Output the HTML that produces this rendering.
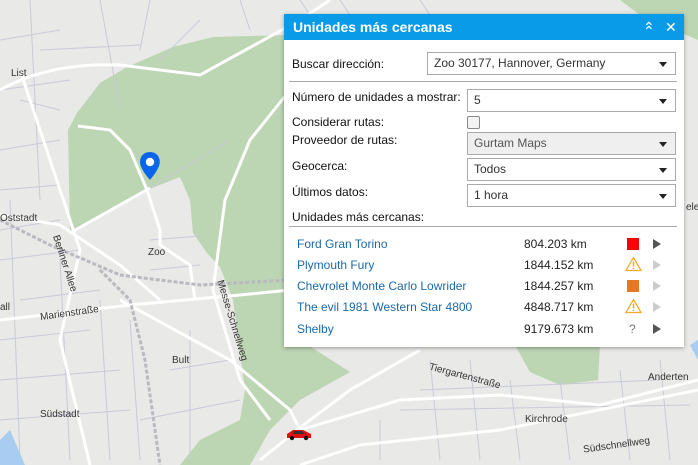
<!DOCTYPE html>
<html><head><meta charset="utf-8"><style>
*{box-sizing:border-box;margin:0;padding:0}
body{width:698px;height:465px;overflow:hidden;position:relative;background:#e9e9e7;font-family:"Liberation Sans",Arial,sans-serif;font-size:12px;color:#222}
svg.map{position:absolute;left:0;top:0}
.panel{position:absolute;left:284px;top:14px;width:400px;height:333px;background:#fff;box-shadow:0 1px 4px rgba(0,0,0,.35)}
.hdr{height:26px;background:#0a9be8;color:#fff;font-weight:bold;font-size:14px;line-height:26px;padding-left:9px;position:relative}
.hdr .i{position:absolute;top:0;font-weight:normal;font-size:14px}
.lbl{position:absolute;left:8px;font-size:12px;color:#111}
.sel{position:absolute;border:1px solid #aaa;background:#fff;height:23px;line-height:21px;padding-left:6px;font-size:12px;color:#333}
.sel:after{content:"";position:absolute;right:8px;top:9px;border-left:4px solid transparent;border-right:4px solid transparent;border-top:5px solid #222}
.line{position:absolute;left:5px;right:7px;height:1px;background:#aaa}
.row{position:absolute;left:0;width:400px;height:20px;font-size:12px}
.row .n{position:absolute;left:13px;color:#1a6aa8}
.row .d{position:absolute;left:240px;color:#222}
.row .ic{position:absolute;left:343px}
.row .ar{position:absolute;left:369px;top:2px;width:0;height:0;border-top:5px solid transparent;border-bottom:5px solid transparent;border-left:8px solid #555}
.row .ar.g{border-left-color:#ccc}
.mt{position:absolute;font-size:10px;color:#333}
</style></head><body>
<svg class="map" width="698" height="465" viewBox="0 0 698 465">
<rect width="698" height="465" fill="#e9e9e7"/>
<g fill="#bcd5b3">
<path d="M68 130 L77 113 L100 83 L127 67 L173 47 L213 37 L290 35 L300 340 L350 372 L300 400 L270 430 L250 465 L180 465 L200 440 L240 420 L245 390 L233 300 L220 267 L207 253 L193 233 L190 200 L180 177 L147 190 L70 233 Z"/>
<path d="M515 345 L600 345 L598 380 L560 385 L530 372Z"/>
<path d="M620 0 L698 0 L698 40 L640 15Z"/>
</g>
<g stroke="#c8cad8" stroke-width="1" fill="none">
<path d="M0 40 L60 30 M0 90 L70 80 M0 150 L60 140 M0 190 L60 185 M0 260 L80 250 M20 300 L100 290 M0 340 L90 330 M0 380 L120 370 M0 420 L130 410 M30 0 L40 200 M100 0 L120 110 M150 0 L140 50 M10 200 L20 460 M60 260 L70 460 M100 300 L110 460 M130 320 L140 460 M190 330 L190 460 M140 420 L240 400 M20 100 L60 110 M0 230 L60 220 M40 50 L140 45 M150 240 L200 236 M150 270 L200 265 M170 370 L230 360 M420 390 L660 380 M400 410 L690 405 M430 360 L440 460 M470 360 L480 460 M510 380 L520 460 M560 380 L570 460 M620 370 L630 460 M660 360 L670 460 M240 0 L250 30 M300 0 L310 15 M340 0 L350 15 M420 0 L430 15 M380 420 L380 460"/>
<path d="M147 190 L230 140 M160 60 L200 20"/>
</g>
<g stroke="#fff" stroke-width="3" fill="none">
<path d="M0 90 Q50 62 120 65 L200 75 L300 20 L330 0"/>
<path d="M20 70 L80 250 L60 340 L90 465"/>
<path d="M0 215 L60 225 L120 265 L160 300"/>
<path d="M70 233 L150 188"/>
<path d="M78 126 L110 130 L130 150 L147 190 L160 230 L160 245 L190 265 L195 300"/>
<path d="M213 290 L225 200 L250 140 L290 90"/>
<path d="M0 320 L130 305 L240 295 L290 290"/>
<path d="M120 300 L230 360 L290 410 L300 430 L400 400 L500 395 L600 405 L698 380"/>
<path d="M213 290 L240 380 L270 420"/>
<path d="M260 460 L310 420 L350 390 L420 350"/>
<path d="M300 465 L360 445 L500 430 L698 390"/>
</g>
<g stroke="#b9b9c0" stroke-width="3" fill="none" stroke-dasharray="4 2">
<path d="M0 220 L50 245 L120 275 L200 285 L290 280"/>
<path d="M100 270 L130 300 L145 360 L160 465"/>
</g>
<path d="M0 440 L10 430 L25 465 L0 465Z" fill="#a9cdf0"/>
<path d="M690 345 L698 340 L698 360Z" fill="#a9cdf0"/>
<g transform="translate(142,152)">
<path d="M11 0 C4 0 0 5 0 11 C0 19 11 31 11 31 C11 31 22 19 22 11 C22 5 18 0 11 0Z" transform="translate(-2,0) scale(.9)" fill="#0a66e8"/>
<circle cx="8" cy="10" r="4.2" fill="#fff"/>
</g>
<g transform="translate(285,428)">
<path d="M2 6 L8 2 L18 2 L26 6 L26 10 L2 10Z" fill="#d11"/>
<path d="M9 3 L17 3 L20 6 L8 6Z" fill="#333"/>
<circle cx="7" cy="10" r="2.2" fill="#111"/><circle cx="21" cy="10" r="2.2" fill="#111"/>
</g>
</svg>
<div class="mt" style="left:11px;top:68px">List</div>
<div class="mt" style="left:0;top:213px">Oststadt</div>
<div class="mt" style="left:148px;top:247px">Zoo</div>
<div class="mt" style="left:40px;top:308px;transform:rotate(-8deg)">Marienstraße</div>
<div class="mt" style="left:35px;top:258px;transform:rotate(72deg)">Berliner Allee</div>
<div class="mt" style="left:190px;top:315px;transform:rotate(73deg)">Messe-Schnellweg</div>
<div class="mt" style="left:172px;top:355px">Bult</div>
<div class="mt" style="left:40px;top:409px">Südstadt</div>
<div class="mt" style="left:428px;top:371px;transform:rotate(15deg)">Tiergartenstraße</div>
<div class="mt" style="left:525px;top:414px">Kirchrode</div>
<div class="mt" style="left:648px;top:372px">Anderten</div>
<div class="mt" style="left:583px;top:440px;transform:rotate(-8deg)">Südschnellweg</div>
<div class="mt" style="left:0;top:302px">all</div>
<div class="mt" style="left:686px;top:202px">ele</div>
<div class="panel">
<div class="hdr">Unidades más cercanas<span class="i" style="left:359px">&#8963;</span><span class="i" style="left:359px;top:4px">&#8963;</span><span class="i" style="left:381px">✕</span></div>
<div class="lbl" style="top:43px">Buscar dirección:</div>
<div class="sel" style="left:143px;top:38px;width:249px">Zoo 30177, Hannover, Germany</div>
<div class="line" style="top:67px"></div>
<div class="lbl" style="top:76px">Número de unidades a mostrar:</div>
<div class="sel" style="left:183px;top:75px;width:209px">5</div>
<div class="lbl" style="top:101px">Considerar rutas:</div>
<div style="position:absolute;left:183px;top:102px;width:13px;height:13px;border:1px solid #888;border-radius:2px;background:#f3f3f3"></div>
<div class="lbl" style="top:119px">Proveedor de rutas:</div>
<div class="sel" style="left:183px;top:118px;width:209px;background:#efefef;color:#555">Gurtam Maps</div>
<div class="lbl" style="top:145px">Geocerca:</div>
<div class="sel" style="left:183px;top:144px;width:209px">Todos</div>
<div class="lbl" style="top:171px">Últimos datos:</div>
<div class="sel" style="left:183px;top:170px;width:209px">1 hora</div>
<div class="lbl" style="top:196px">Unidades más cercanas:</div>
<div class="line" style="top:212px"></div>
<div class="row" style="top:223px"><span class="n">Ford Gran Torino</span><span class="d">804.203 km</span><span class="ic" style="top:1px;width:12px;height:12px;background:#f00"></span><span class="ar"></span></div>
<div class="row" style="top:244px"><span class="n">Plymouth Fury</span><span class="d">1844.152 km</span><svg class="ic" style="left:341px;top:-2px" width="17" height="16"><path d="M8.5 1.5 L16 14.5 L1 14.5Z" fill="none" stroke="#f5a623" stroke-width="1.2"/><path d="M8.5 5.5 V10.5 M8.5 12 V13" stroke="#f5a623" stroke-width="1.5"/></svg><span class="ar g"></span></div>
<div class="row" style="top:265px"><span class="n">Chevrolet Monte Carlo Lowrider</span><span class="d">1844.257 km</span><span class="ic" style="top:1px;width:12px;height:12px;background:#e87722"></span><span class="ar g"></span></div>
<div class="row" style="top:286px"><span class="n">The evil 1981 Western Star 4800</span><span class="d">4848.717 km</span><svg class="ic" style="left:341px;top:-2px" width="17" height="16"><path d="M8.5 1.5 L16 14.5 L1 14.5Z" fill="none" stroke="#f5a623" stroke-width="1.2"/><path d="M8.5 5.5 V10.5 M8.5 12 V13" stroke="#f5a623" stroke-width="1.5"/></svg><span class="ar g"></span></div>
<div class="row" style="top:308px"><span class="n">Shelby</span><span class="d">9179.673 km</span><span class="ic" style="left:345px;color:#777">?</span><span class="ar"></span></div>
</div>
</body></html>
